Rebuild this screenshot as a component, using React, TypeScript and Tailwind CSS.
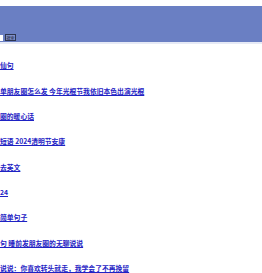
const links = [
  "仙句",
  "单朋友圈怎么发 今年光棍节我依旧本色出演光棍",
  "圈的暖心话",
  "短语 2024清明节安康",
  "去英文",
  "24",
  "简单句子",
  "句 睡前发朋友圈的无聊说说",
  "说说：你喜欢转头就走，我学会了不再挽留",
];

const App = () => (
  <div className="w-[262px] h-[273px] overflow-hidden bg-white" style={{ fontFamily: '"Noto Sans CJK SC", "Noto Sans", sans-serif' }}>
    <header className="mt-[6px] h-[36px] bg-[#6a7fc3] flex items-end pb-[1px]">
      <div className="flex items-center gap-[2px]">
        <div className="w-[3px] h-[6px] bg-white" />
        <button className="h-[7px] w-[11px] border border-[#2d3550] bg-[#7f90c9] text-[4px] leading-none text-[#1d2340] flex items-center justify-center">
          搜索
        </button>
      </div>
    </header>
    <div className="h-[2px] bg-[#e6eaf6]" />
    <ul className="pt-[9px]">
      {links.map((t) => (
        <li key={t} className="h-[25.33px] flex items-center">
          <a href="#" className="text-[6.8px] leading-none font-bold text-[#1e22c4] underline whitespace-nowrap">
            {t}
          </a>
        </li>
      ))}
    </ul>
  </div>
);

export default App;
